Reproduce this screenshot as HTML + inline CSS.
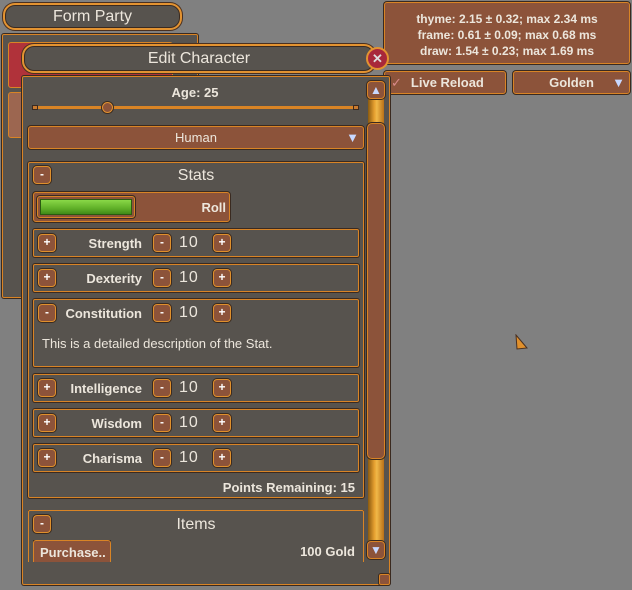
<!DOCTYPE html>
<html><head><style>
*{box-sizing:border-box;margin:0;padding:0}
body{width:632px;height:590px;background:#808080;position:relative;overflow:hidden;font-family:"Liberation Sans",sans-serif;color:#ece6dc;font-weight:bold}
.a{position:absolute}
.pan{background:#57534e;border:1px solid #d98425;box-shadow:0 0 0 1px #3a2a20;border-radius:2px}
.title{background:#57534e;border:2px solid #e39331;box-shadow:0 0 0 1px #4a3020, inset 0 0 0 1px #3a2a20;border-radius:12px;text-align:center;font-size:16px;font-weight:normal}
.br{background:#8c533a;border:1px solid #d98425;box-shadow:0 0 0 1px #3a2a20;border-radius:3px}
.sb{width:18px;height:18px;background:#8c533a;border:1px solid #e0902c;box-shadow:0 0 0 1px #3a2a20;border-radius:4px;font-size:12px;text-align:center;line-height:15px;color:#fff}
.row{left:33px;width:326px;height:28px;background:#57534e;border:1px solid #d98425;box-shadow:0 0 0 1px #3a2a20;border-radius:2px}
.lab{position:absolute;right:216px;top:6px;font-size:13px}
.num{position:absolute;left:145px;top:4px;font-size:16px;font-weight:normal;letter-spacing:1px}
t{position:absolute;font-size:13px}
</style></head><body>
<!-- party window -->
<div class="a pan" style="left:2px;top:34px;width:196px;height:264px"></div>
<div class="a" style="left:8px;top:42px;width:165px;height:46px;background:#b0323a;border:1px solid #d98425;border-radius:3px"></div>
<div class="a" style="left:8px;top:92px;width:165px;height:46px;background:#9c6650;border:1px solid #d98425;border-radius:3px"></div>
<div class="a title" style="left:3px;top:3px;width:179px;height:27px;line-height:23px">Form Party</div>

<!-- right stats -->
<div class="a br" style="left:384px;top:2px;width:246px;height:62px;font-size:12px;text-align:center;line-height:16px;padding-top:8px">thyme: 2.15 ± 0.32; max 2.34 ms<br>frame: 0.61 ± 0.09; max 0.68 ms<br>draw: 1.54 ± 0.23; max 1.69 ms</div>
<div class="a br" style="left:384px;top:71px;width:122px;height:23px;font-size:13px;line-height:21px"><span style="color:#d98a8a;font-weight:normal;margin-left:6px">✓</span><span style="margin-left:9px">Live Reload</span></div>
<div class="a br" style="left:513px;top:71px;width:117px;height:23px;font-size:13px;line-height:21px;text-align:center">Golden<span class="a" style="right:4px;top:0;color:#c8d8ff">▼</span></div>

<!-- edit character -->
<div class="a pan" style="left:22px;top:76px;width:368px;height:509px"></div>
<div class="a title" style="left:22px;top:44px;width:354px;height:29px;line-height:25px">Edit Character</div>
<div class="a" style="left:366px;top:47px;width:23px;height:23px;border-radius:50%;background:#a8283a;border:2px solid #e39331;color:#ddd;font-size:13px;text-align:center;line-height:19px">✕</div>

<t style="left:22px;width:346px;text-align:center;top:85px">Age: 25</t>
<div class="a" style="left:32px;top:106px;width:327px;height:3px;background:#d98425"></div>
<div class="a" style="left:32px;top:105px;width:6px;height:5px;background:#c87a30;border:1px solid #3a2a20"></div>
<div class="a" style="left:353px;top:105px;width:6px;height:5px;background:#c87a30;border:1px solid #3a2a20"></div>
<div class="a" style="left:102px;top:102px;width:11px;height:11px;border-radius:50%;background:#8c533a;border:1px solid #e39331;box-shadow:0 0 0 1px #3a2a20"></div>

<div class="a br" style="left:28px;top:126px;width:336px;height:23px;font-size:13px;text-align:center;line-height:21px;font-weight:normal">Human<span class="a" style="right:4px;top:0;color:#c8d8ff">▼</span></div>

<!-- scrollbar -->
<div class="a" style="left:368px;top:98px;width:16px;height:448px;background:linear-gradient(90deg,#8a5a10,#e6a030 40%,#f0b848 55%,#b87018)"></div>
<div class="a br" style="left:367px;top:123px;width:18px;height:336px;border-radius:5px"></div>
<div class="a br" style="left:367px;top:81px;width:18px;height:18px;color:#c8d8ff;font-size:12px;text-align:center;line-height:16px;border-radius:4px">▲</div>
<div class="a br" style="left:367px;top:541px;width:18px;height:18px;color:#c8d8ff;font-size:12px;text-align:center;line-height:16px;border-radius:4px">▼</div>
<div class="a br" style="left:379px;top:574px;width:11px;height:11px;border-radius:2px"></div>

<!-- stats -->
<div class="a pan" style="left:28px;top:162px;width:336px;height:336px"></div>
<div class="a sb" style="left:33px;top:166px">-</div>
<t style="left:28px;width:336px;text-align:center;top:167px;font-size:16px;font-weight:normal">Stats</t>
<div class="a br" style="left:33px;top:192px;width:197px;height:30px"><t style="right:3px;top:7px">Roll</t></div>
<div class="a" style="left:37px;top:196px;width:98px;height:22px;border:1px solid #d98425;border-radius:3px;box-shadow:0 0 0 1px #3a2a20;background:#8c533a"></div>
<div class="a" style="left:40px;top:199px;width:92px;height:16px;background:linear-gradient(#8ad848,#60b028 60%,#3f8a18);border:1px solid #2a5a10"></div>

<div class="a row" style="top:229px"><div class="a sb" style="left:4px;top:4px">+</div><span class="lab">Strength</span><div class="a sb" style="left:119px;top:4px">-</div><span class="num">10</span><div class="a sb" style="left:179px;top:4px">+</div></div>
<div class="a row" style="top:264px"><div class="a sb" style="left:4px;top:4px">+</div><span class="lab">Dexterity</span><div class="a sb" style="left:119px;top:4px">-</div><span class="num">10</span><div class="a sb" style="left:179px;top:4px">+</div></div>
<div class="a row" style="top:299px;height:68px"><div class="a sb" style="left:4px;top:4px">-</div><span class="lab">Constitution</span><div class="a sb" style="left:119px;top:4px">-</div><span class="num">10</span><div class="a sb" style="left:179px;top:4px">+</div><t style="left:8px;top:36px;font-weight:normal">This is a detailed description of the Stat.</t></div>
<div class="a row" style="top:374px"><div class="a sb" style="left:4px;top:4px">+</div><span class="lab">Intelligence</span><div class="a sb" style="left:119px;top:4px">-</div><span class="num">10</span><div class="a sb" style="left:179px;top:4px">+</div></div>
<div class="a row" style="top:409px"><div class="a sb" style="left:4px;top:4px">+</div><span class="lab">Wisdom</span><div class="a sb" style="left:119px;top:4px">-</div><span class="num">10</span><div class="a sb" style="left:179px;top:4px">+</div></div>
<div class="a row" style="top:444px"><div class="a sb" style="left:4px;top:4px">+</div><span class="lab">Charisma</span><div class="a sb" style="left:119px;top:4px">-</div><span class="num">10</span><div class="a sb" style="left:179px;top:4px">+</div></div>
<t style="right:277px;top:480px">Points Remaining: 15</t>

<!-- items -->
<div class="a" style="left:28px;top:510px;width:336px;height:52px;overflow:hidden"><div class="a pan" style="left:0;top:0;width:336px;height:80px"></div></div>
<div class="a sb" style="left:33px;top:515px">-</div>
<t style="left:28px;width:336px;text-align:center;top:516px;font-size:16px;font-weight:normal">Items</t>
<div class="a" style="left:33px;top:540px;width:78px;height:22px;overflow:hidden"><div class="br" style="width:78px;height:26px;font-size:13px;padding:4px 0 0 6px">Purchase..</div></div>
<t style="right:277px;top:544px">100 Gold</t>

<!-- cursor -->
<svg class="a" style="left:515px;top:334px" width="14" height="17"><polygon points="1,1 12,14 2,15" fill="#e0902c" stroke="#4a3020" stroke-width="1"/></svg>
</body></html>
